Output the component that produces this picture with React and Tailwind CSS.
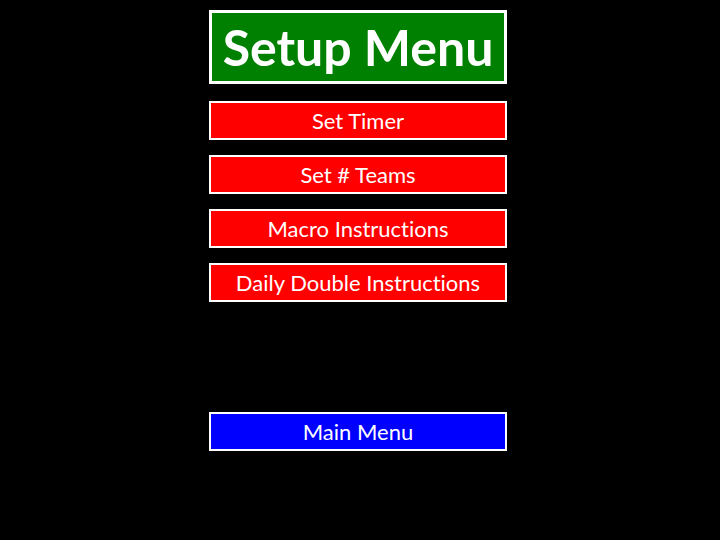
import React from 'react'

const setupItems = ['Set Timer', 'Set # Teams', 'Macro Instructions', 'Daily Double Instructions']

const MenuButton = ({ label, color }) => (
  <button
    className={`w-full h-[39px] border-2 border-white text-white text-[22px] leading-none flex items-center justify-center ${color}`}
  >
    {label}
  </button>
)

const App = () => {
  return (
    <div
      className='w-[720px] h-[540px] bg-black overflow-hidden [font-variant-ligatures:none]'
      style={{ fontFamily: 'Lato, "Open Sans", sans-serif' }}
    >
      <div className='ml-[209px] w-[298px] pt-[10px] flex flex-col'>
        <div className='h-[74px] border-[3px] border-white bg-[#008000] flex items-center justify-center'>
          <h1 className='text-white text-[50px] font-bold leading-none'>Setup Menu</h1>
        </div>

        <div className='mt-[17px] flex flex-col gap-[15px]'>
          {setupItems.map((item) => (
            <MenuButton key={item} label={item} color='bg-[#ff0000]' />
          ))}
        </div>

        <div className='mt-[110px]'>
          <MenuButton label='Main Menu' color='bg-[#0000ff]' />
        </div>
      </div>
    </div>
  )
}

export default App
